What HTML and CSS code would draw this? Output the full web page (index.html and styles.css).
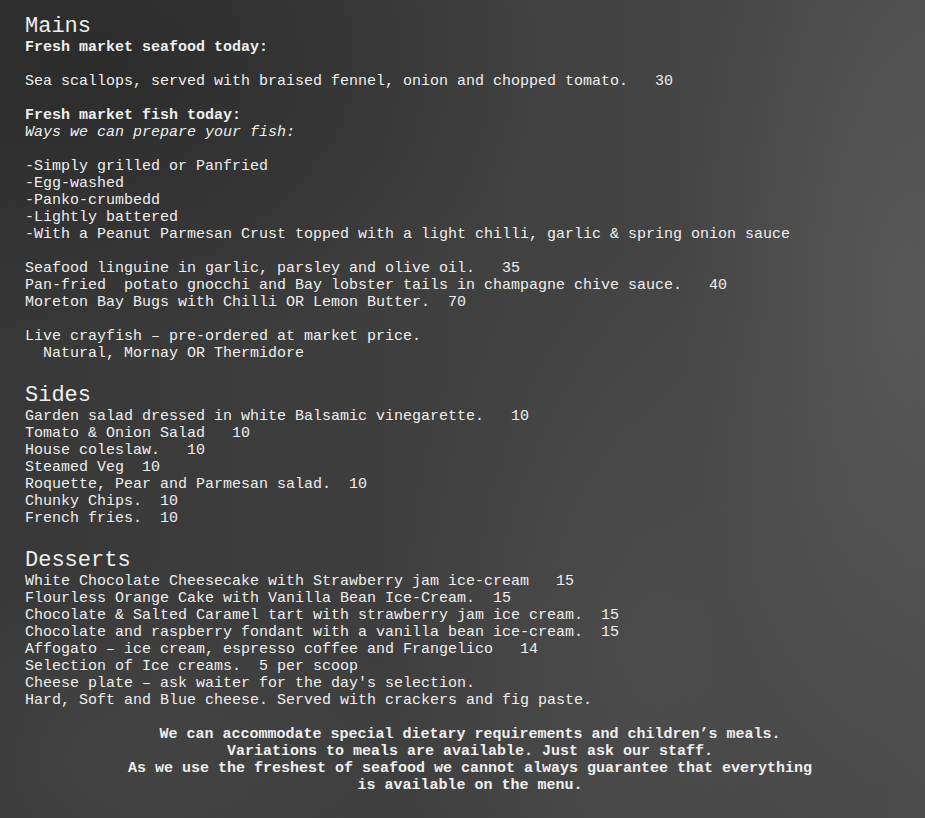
FILE: index.html
```
<!DOCTYPE html>
<html lang="en">
<head>
    <meta charset="UTF-8">
    <meta name="viewport" content="width=device-width, initial-scale=1.0">
    <title>Menu</title>
    <link rel="stylesheet" href="styles.css">
</head>
<body>

<div class="menu">
    <div class="section">
        <h2>Mains</h2>
<pre class="lines"><b>Fresh market seafood today:</b>

Sea scallops, served with braised fennel, onion and chopped tomato.   30

<b>Fresh market fish today:</b>
<i>Ways we can prepare your fish:</i>

-Simply grilled or Panfried
-Egg-washed
-Panko-crumbedd
-Lightly battered
-With a Peanut Parmesan Crust topped with a light chilli, garlic &amp; spring onion sauce

Seafood linguine in garlic, parsley and olive oil.   35
Pan-fried  potato gnocchi and Bay lobster tails in champagne chive sauce.   40
Moreton Bay Bugs with Chilli OR Lemon Butter.  70

Live crayfish – pre-ordered at market price.
  Natural, Mornay OR Thermidore</pre>
    </div>

    <div class="section">
        <h2>Sides</h2>
<pre class="lines">Garden salad dressed in white Balsamic vinegarette.   10
Tomato &amp; Onion Salad   10
House coleslaw.   10
Steamed Veg  10
Roquette, Pear and Parmesan salad.  10
Chunky Chips.  10
French fries.  10</pre>
    </div>

    <div class="section">
        <h2>Desserts</h2>
<pre class="lines">White Chocolate Cheesecake with Strawberry jam ice-cream   15
Flourless Orange Cake with Vanilla Bean Ice-Cream.  15
Chocolate &amp; Salted Caramel tart with strawberry jam ice cream.  15
Chocolate and raspberry fondant with a vanilla bean ice-cream.  15
Affogato – ice cream, espresso coffee and Frangelico   14
Selection of Ice creams.  5 per scoop
Cheese plate – ask waiter for the day's selection.
Hard, Soft and Blue cheese. Served with crackers and fig paste.</pre>
    </div>

    <div class="note">
        <p>We can accommodate special dietary requirements and children’s meals.</p>
        <p>Variations to meals are available. Just ask our staff.</p>
        <p>As we use the freshest of seafood we cannot always guarantee that everything<br>is available on the menu.</p>
    </div>
</div>

</body>
</html>
```

FILE: styles.css
```
html, body {
    height: 100%;
}
body {
    margin: 0;
    color: #efefef;
    font-family: "Liberation Mono", "Courier New", monospace;
    background-color: #414141;
    background-image:
        radial-gradient(ellipse 220px 500px at 900px 300px, rgba(110, 110, 110, 0.35), rgba(110, 110, 110, 0) 100%),
        radial-gradient(ellipse 260px 400px at 640px 650px, rgba(100, 100, 100, 0.25), rgba(100, 100, 100, 0) 100%),
        radial-gradient(ellipse 300px 200px at 120px 760px, rgba(95, 95, 95, 0.25), rgba(95, 95, 95, 0) 100%),
        radial-gradient(ellipse 450px 300px at 100px 60px, rgba(30, 30, 30, 0.5), rgba(30, 30, 30, 0) 100%),
        linear-gradient(90deg, #383838 0%, #3f3f3f 45%, #464646 80%, #4c4c4c 100%);
    overflow: hidden;
}
.menu {
    padding: 14px 10px 0 25px;
}
.section + .section {
    margin-top: 21px;
}
h2 {
    margin: 0;
    padding-top: 1px;
    font-size: 22px;
    line-height: 24px;
    font-weight: normal;
}
.lines {
    margin: 0;
    font-family: inherit;
    font-size: 15px;
    line-height: 17px;
}
.note {
    margin-top: 17px;
    text-align: center;
    font-weight: bold;
    font-size: 15px;
    line-height: 17px;
}
.note p {
    margin: 0;
}
```
